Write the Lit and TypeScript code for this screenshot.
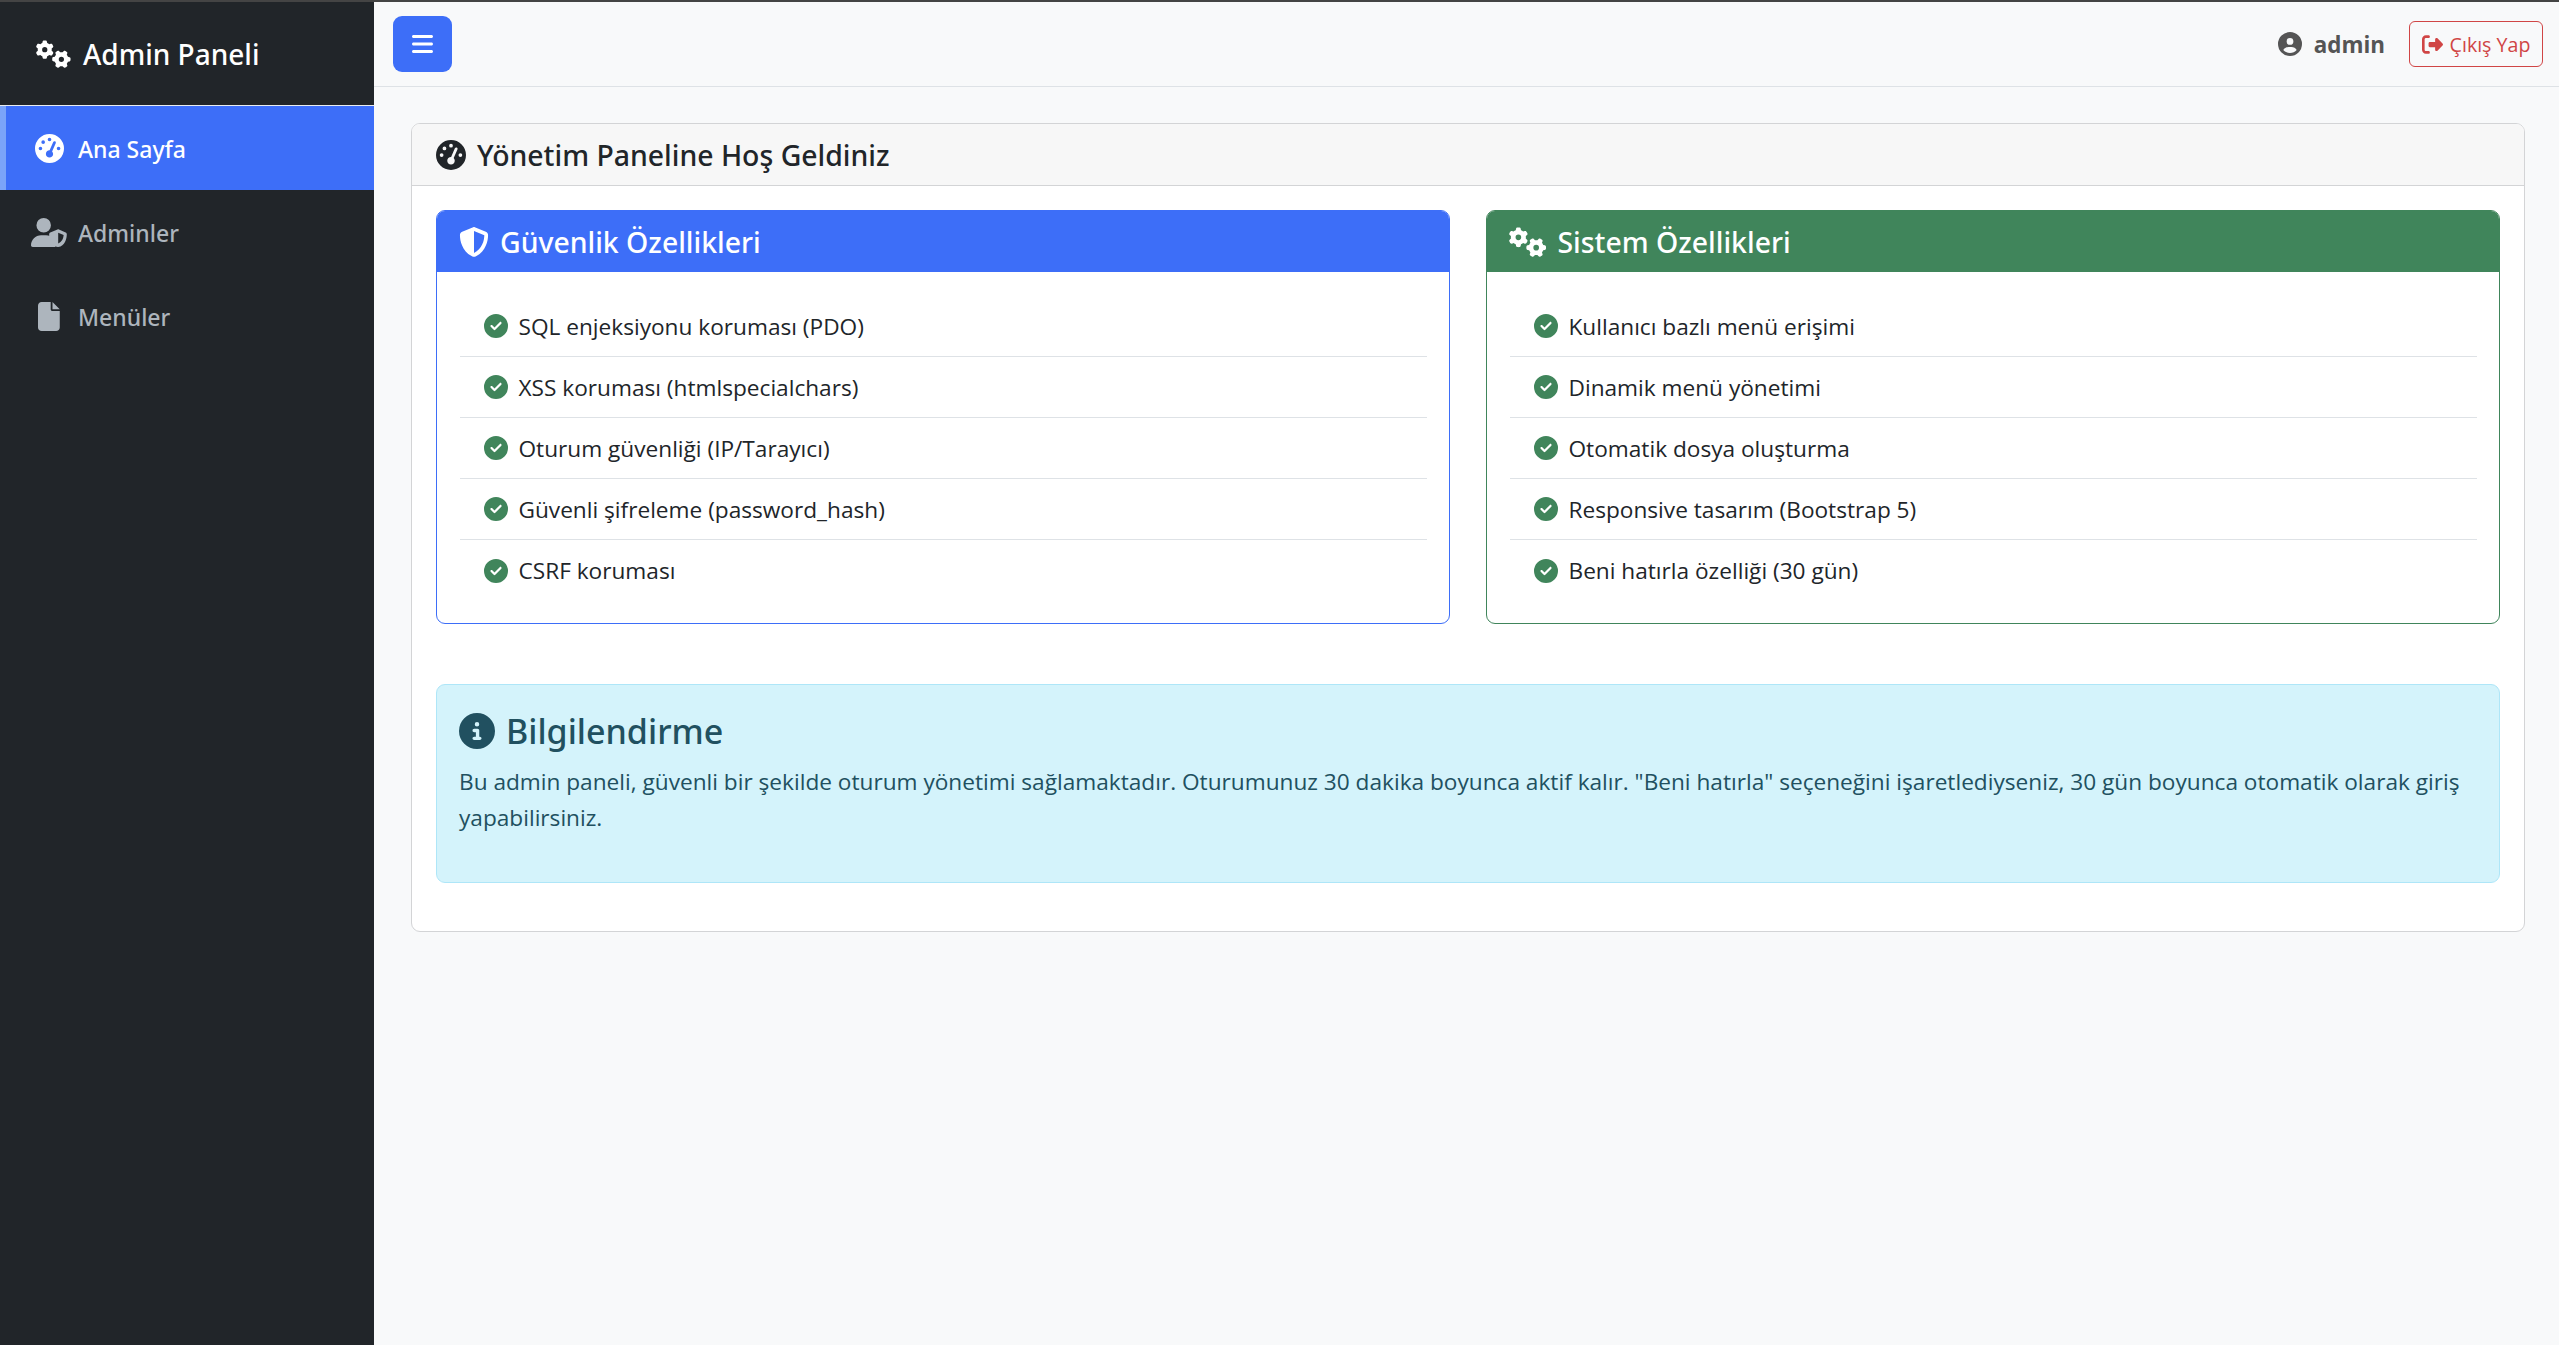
import { LitElement, html, css, svg } from "lit";
import { customElement } from "lit/decorators.js";

const ICONS: Record<string, [number, string]> = {
  gears: [640, "M308.5 135.3c7.1-6.3 9.9-16.2 6.2-25c-2.3-5.3-4.8-10.5-7.6-15.5L304 89.4c-3-5-6.3-9.9-9.8-14.6c-5.7-7.6-15.7-10.1-24.7-7.1l-28.2 9.3c-10.7-8.8-23-16-36.2-20.9L199 27.1c-1.9-9.3-9.1-16.7-18.5-17.8C173.9 8.4 167.2 8 160.4 8h-.7c-6.8 0-13.5 .4-20.1 1.2c-9.4 1.1-16.6 8.6-18.5 17.8L115 56.1c-13.3 5-25.5 12.1-36.2 20.9L50.5 67.8c-9-3-19-.5-24.7 7.1c-3.5 4.7-6.8 9.6-9.9 14.6l-3 5.3c-2.8 5-5.3 10.2-7.6 15.6c-3.7 8.7-.9 18.6 6.2 25l22.2 19.8C32.6 161.9 32 168.9 32 176s.6 14.1 1.7 20.9L11.5 216.7c-7.1 6.3-9.9 16.2-6.2 25c2.3 5.3 4.8 10.5 7.6 15.6l3 5.2c3 5.1 6.3 9.9 9.9 14.6c5.7 7.6 15.7 10.1 24.7 7.1l28.2-9.3c10.7 8.8 23 16 36.2 20.9l6.1 29.1c1.9 9.3 9.1 16.7 18.5 17.8c6.7 .8 13.5 1.2 20.4 1.2s13.7-.4 20.4-1.2c9.4-1.1 16.6-8.6 18.5-17.8l6.1-29.1c13.3-5 25.5-12.1 36.2-20.9l28.2 9.3c9 3 19 .5 24.7-7.1c3.5-4.7 6.8-9.5 9.8-14.6l3.1-5.4c2.8-5 5.3-10.2 7.6-15.5c3.7-8.7 .9-18.6-6.2-25l-22.2-19.8c1.1-6.8 1.7-13.8 1.7-20.9s-.6-14.1-1.7-20.9l22.2-19.8zM112 176a48 48 0 1 1 96 0 48 48 0 1 1 -96 0zM504.7 500.5c6.3 7.1 16.2 9.9 25 6.2c5.3-2.3 10.5-4.8 15.5-7.6l5.4-3.1c5-3 9.9-6.3 14.6-9.8c7.6-5.7 10.1-15.7 7.1-24.7l-9.3-28.2c8.8-10.7 16-23 20.9-36.2l29.1-6.1c9.3-1.9 16.7-9.1 17.8-18.5c.8-6.7 1.2-13.5 1.2-20.4s-.4-13.7-1.2-20.4c-1.1-9.4-8.6-16.6-17.8-18.5L583.9 307c-5-13.3-12.1-25.5-20.9-36.2l9.3-28.2c3-9 .5-19-7.1-24.7c-4.7-3.5-9.6-6.8-14.6-9.9l-5.3-3c-5-2.8-10.2-5.3-15.6-7.6c-8.7-3.7-18.6-.9-25 6.2l-19.8 22.2c-6.8-1.1-13.8-1.7-20.9-1.7s-14.1 .6-20.9 1.7l-19.8-22.2c-6.3-7.1-16.2-9.9-25-6.2c-5.3 2.3-10.5 4.8-15.6 7.6l-5.2 3c-5.1 3-9.9 6.3-14.6 9.9c-7.6 5.7-10.1 15.7-7.1 24.7l9.3 28.2c-8.8 10.7-16 23-20.9 36.2L315.1 313c-9.3 1.9-16.7 9.1-17.8 18.5c-.8 6.7-1.2 13.5-1.2 20.4s.4 13.7 1.2 20.4c1.1 9.4 8.6 16.6 17.8 18.5l29.1 6.1c5 13.3 12.1 25.5 20.9 36.2l-9.3 28.2c-3 9-.5 19 7.1 24.7c4.7 3.5 9.5 6.8 14.6 9.8l5.4 3.1c5 2.8 10.2 5.3 15.5 7.6c8.7 3.7 18.6 .9 25-6.2l19.8-22.2c6.8 1.1 13.8 1.7 20.9 1.7s14.1-.6 20.9-1.7l19.8 22.2zM464 304a48 48 0 1 1 0 96 48 48 0 1 1 0-96z"],
  gauge: [512, "M0 256a256 256 0 1 1 512 0A256 256 0 1 1 0 256zM288 96a32 32 0 1 0 -64 0 32 32 0 1 0 64 0zM256 416c35.3 0 64-28.7 64-64c0-17.4-6.9-33.1-18.1-44.6L366 161.7c5.3-12.1-.2-26.3-12.3-31.6s-26.3 .2-31.6 12.3L257.9 288c-.6 0-1.3 0-1.9 0c-35.3 0-64 28.7-64 64s28.7 64 64 64zM176 144a32 32 0 1 0 -64 0 32 32 0 1 0 64 0zM96 288a32 32 0 1 0 0-64 32 32 0 1 0 0 64zm352-32a32 32 0 1 0 -64 0 32 32 0 1 0 64 0z"],
  usershield: [640, "M224 256A128 128 0 1 0 224 0a128 128 0 1 0 0 256zm-45.7 48C79.8 304 0 383.8 0 482.3C0 498.7 13.3 512 29.7 512H418.3c4.6 0 8.9-1 12.8-2.9C379 465.5 345 396 338 323.5c-21-12.4-45.6-19.5-71.7-19.5H178.3zM493.3 201.1c-8.2-3.5-17.4-3.5-25.6 0l-128 54.9C328 261 320 272.6 320 285.5c.7 78.5 33 212 153.500 224.500c2.500.3 5 .3 7.500 0C598.500 497 631.300 364 632 285.500c0-12.900-8-24.500-19.700-29.500L493.300 201.100zM480 450V260l96 41C571 366 545 425 480 450z"],
  file: [384, "M0 64C0 28.7 28.7 0 64 0H224V128c0 17.7 14.3 32 32 32H384V448c0 35.3-28.7 64-64 64H64c-35.3 0-64-28.7-64-64V64zm384 64H256V0L384 128z"],
  bars: [448, "M0 96C0 78.3 14.3 64 32 64H416c17.7 0 32 14.3 32 32s-14.3 32-32 32H32C14.3 128 0 113.7 0 96zM0 256c0-17.7 14.3-32 32-32H416c17.7 0 32 14.3 32 32s-14.3 32-32 32H32c-17.7 0-32-14.3-32-32zM448 416c0 17.7-14.3 32-32 32H32c-17.7 0-32-14.3-32-32s14.3-32 32-32H416c17.7 0 32 14.3 32 32z"],
  user: [512, "M399 384.2C376.9 345.8 335.4 320 288 320H224c-47.4 0-88.9 25.8-111 64.2c35.2 39.2 86.2 63.8 143 63.8s107.8-24.7 143-63.8zM0 256a256 256 0 1 1 512 0A256 256 0 1 1 0 256zm256 16a72 72 0 1 0 0-144 72 72 0 1 0 0 144z"],
  logout: [512, "M377.9 105.9L500.7 228.7c7.2 7.2 11.3 17.1 11.3 27.3s-4.1 20.1-11.3 27.3L377.9 406.1c-6.4 6.4-15 9.9-24 9.9c-18.7 0-33.9-15.2-33.9-33.9l0-62.1-128 0c-17.7 0-32-14.3-32-32l0-64c0-17.7 14.3-32 32-32l128 0 0-62.1c0-18.7 15.2-33.9 33.9-33.9c9 0 17.6 3.6 24 9.9zM160 96L96 96c-17.7 0-32 14.3-32 32l0 256c0 17.7 14.3 32 32 32l64 0c17.7 0 32 14.3 32 32s-14.3 32-32 32l-64 0c-53 0-96-43-96-96L0 128C0 75 43 32 96 32l64 0c17.7 0 32 14.3 32 32s-14.3 32-32 32z"],
  shield: [512, "M256 0c4.6 0 9.2 1 13.4 2.9L457.7 82.8c22 9.3 38.4 31 38.3 57.2c-.5 99.2-41.3 280.7-213.6 363.2c-16.7 8-36.1 8-52.8 0C57.3 420.7 16.5 239.2 16 140c-.1-26.2 16.3-47.9 38.3-57.2L242.7 2.9C246.8 1 251.4 0 256 0zm0 66.8V444.8C394 378 431.1 230.1 432 141.4L256 66.8l0 0z"],
  check: [512, "M256 512A256 256 0 1 0 256 0a256 256 0 1 0 0 512zM369 209L241 337c-9.4 9.4-24.6 9.4-33.9 0l-64-64c-9.4-9.4-9.4-24.6 0-33.9s24.6-9.4 33.9 0l47 47L335 175c9.4-9.4 24.6-9.4 33.9 0s9.4 24.6 0 33.9z"],
  info: [512, "M256 512A256 256 0 1 0 256 0a256 256 0 1 0 0 512zM216 336h24V272H216c-13.3 0-24-10.7-24-24s10.7-24 24-24h48c13.3 0 24 10.7 24 24v88h8c13.3 0 24 10.7 24 24s-10.7 24-24 24H216c-13.3 0-24-10.7-24-24s10.7-24 24-24zm40-208a32 32 0 1 1 0 64 32 32 0 1 1 0-64z"],
};

const icon = (name: string, cls = "") => {
  const [w, d] = ICONS[name];
  return html`<svg class="ic ${cls}" viewBox="0 0 ${w} 512" fill="currentColor">${svg`<path d=${d}></path>`}</svg>`;
};

const SEC = ["SQL enjeksiyonu koruması (PDO)", "XSS koruması (htmlspecialchars)", "Oturum güvenliği (IP/Tarayıcı)", "Güvenli şifreleme (password_hash)", "CSRF koruması"];
const SYS = ["Kullanıcı bazlı menü erişimi", "Dinamik menü yönetimi", "Otomatik dosya oluşturma", "Responsive tasarım (Bootstrap 5)", "Beni hatırla özelliği (30 gün)"];

@customElement("app-root")
export class AppRoot extends LitElement {
  static styles = css`
    :host { display: block; min-height: 100vh; font-family: "Open Sans", "Noto Sans", sans-serif; font-size: 22.65px; color: #212529; background: #f8f9fa; }
    * { box-sizing: border-box; }
    .ic { height: 1em; width: auto; display: block; flex: none; }
    .strip { height: 2px; background: #444; }
    .shell { display: flex; min-height: 1343px; }
    .side { width: 374px; flex: none; background: #212529; color: #fff; }
    .brand { height: 104px; display: flex; align-items: center; gap: 12px; padding: 0 0 0 36px; border-bottom: 1.5px solid #e9ecef; font-family: "Noto Sans", sans-serif; font-size: 28px; font-weight: 500; }
    .brand .ic { font-size: 28px; }
    .nav { display: flex; flex-direction: column; }
    .link { height: 84px; display: flex; align-items: center; padding: 1px 0 0 33px; color: #adb5bd; font-family: "Noto Sans", sans-serif; font-size: 23px; font-weight: 500; }
    .link .box { width: 32px; margin-right: 13px; display: flex; justify-content: center; }
    .link .ic { font-size: 29px; }
    .link.on { background: #3d6ef8; color: #fff; border-left: 6px solid #7ba4f9; padding-left: 27px; }
    .main { flex: 1; min-width: 0; }
    .top { height: 85px; display: flex; align-items: center; justify-content: space-between; padding: 0 16px 0 19px; border-bottom: 1.5px solid #dee2e6; }
    .menu { width: 59px; height: 56px; border: 0; border-radius: 9px; background: #3d6ef8; color: #fff; display: flex; align-items: center; justify-content: center; font-size: 24px; padding: 0; }
    .right { display: flex; align-items: center; }
    .who { display: flex; align-items: center; gap: 12px; color: #555; font-weight: 700; font-size: 22.4px; margin-right: 24px; }
    .who .ic { font-size: 24px; }
    .out { display: flex; align-items: center; gap: 7px; width: 134px; height: 46px; justify-content: center; border: 1.5px solid #d04545; border-radius: 6px; color: #d04545; font-size: 19.6px; }
    .out .ic { font-size: 21px; }
    .content { padding: 36px 34px 36px 37px; }
    .card { background: #fff; border: 1.5px solid #d3d4d6; border-radius: 9px; overflow: hidden; }
    .head { height: 62px; display: flex; align-items: center; gap: 11px; padding: 0 24px; background: #f7f7f7; border-bottom: 1.5px solid #d3d4d6; font-family: "Noto Sans", sans-serif; font-size: 28.4px; font-weight: 500; }
    .head .ic { font-size: 30px; }
    .body { padding: 24px 24px 48px 24px; }
    .cols { display: grid; grid-template-columns: 1fr 1fr; gap: 36px; margin-bottom: 60px; }
    .sub { border: 1.5px solid; border-radius: 9px; background: #fff; overflow: hidden; }
    .sub.blue { border-color: #3d6ef8; }
    .sub.green { border-color: #40855b; }
    .subhead { height: 61px; display: flex; align-items: center; gap: 11px; padding: 0 22px; color: #fff; font-family: "Noto Sans", sans-serif; font-size: 28.4px; font-weight: 500; }
    .blue .subhead { background: #3d6ef8; }
    .green .subhead { background: #40855b; }
    .subhead .ic { font-size: 30px; }
    .list { list-style: none; margin: 0; padding: 24px 22.5px 22px; }
    .list li { height: 61px; display: flex; align-items: center; gap: 11px; padding-left: 24px; border-bottom: 1.5px solid #dee2e6; }
    .list li:last-child { border-bottom: 0; }
    .list .ic { color: #40855b; font-size: 24px; }
    .alert { background: #d4f3fb; border: 1.5px solid #aee6f8; border-radius: 9px; color: #215060; padding: 24px 22px 46px; }
    .alert h4 { display: flex; align-items: center; gap: 11px; margin: 0 0 12px; height: 43px; font-family: "Noto Sans", sans-serif; font-size: 34px; font-weight: 500; }
    .alert h4 .ic { font-size: 36px; }
    .alert p { margin: 0; line-height: 36px; }
  `;

  render() {
    return html`
      <div class="strip"></div>
      <div class="shell">
        <aside class="side">
          <div class="brand">${icon("gears")}<span>Admin Paneli</span></div>
          <nav class="nav">
            <div class="link on"><span class="box">${icon("gauge")}</span>Ana Sayfa</div>
            <div class="link"><span class="box">${icon("usershield")}</span>Adminler</div>
            <div class="link"><span class="box">${icon("file")}</span>Menüler</div>
          </nav>
        </aside>
        <main class="main">
          <header class="top">
            <button class="menu">${icon("bars")}</button>
            <div class="right">
              <div class="who">${icon("user")}<span>admin</span></div>
              <div class="out">${icon("logout")}<span>Çıkış Yap</span></div>
            </div>
          </header>
          <div class="content">
            <section class="card">
              <div class="head">${icon("gauge")}<span>Yönetim Paneline Hoş Geldiniz</span></div>
              <div class="body">
                <div class="cols">
                  <div class="sub blue">
                    <div class="subhead">${icon("shield")}<span>Güvenlik Özellikleri</span></div>
                    <ul class="list">${SEC.map((t) => html`<li>${icon("check")}<span>${t}</span></li>`)}</ul>
                  </div>
                  <div class="sub green">
                    <div class="subhead">${icon("gears")}<span>Sistem Özellikleri</span></div>
                    <ul class="list">${SYS.map((t) => html`<li>${icon("check")}<span>${t}</span></li>`)}</ul>
                  </div>
                </div>
                <div class="alert">
                  <h4>${icon("info")}<span>Bilgilendirme</span></h4>
                  <p>Bu admin paneli, güvenli bir şekilde oturum yönetimi sağlamaktadır. Oturumunuz 30 dakika boyunca aktif kalır. "Beni hatırla" seçeneğini işaretlediyseniz, 30 gün boyunca otomatik olarak giriş yapabilirsiniz.</p>
                </div>
              </div>
            </section>
          </div>
        </main>
      </div>
    `;
  }
}
